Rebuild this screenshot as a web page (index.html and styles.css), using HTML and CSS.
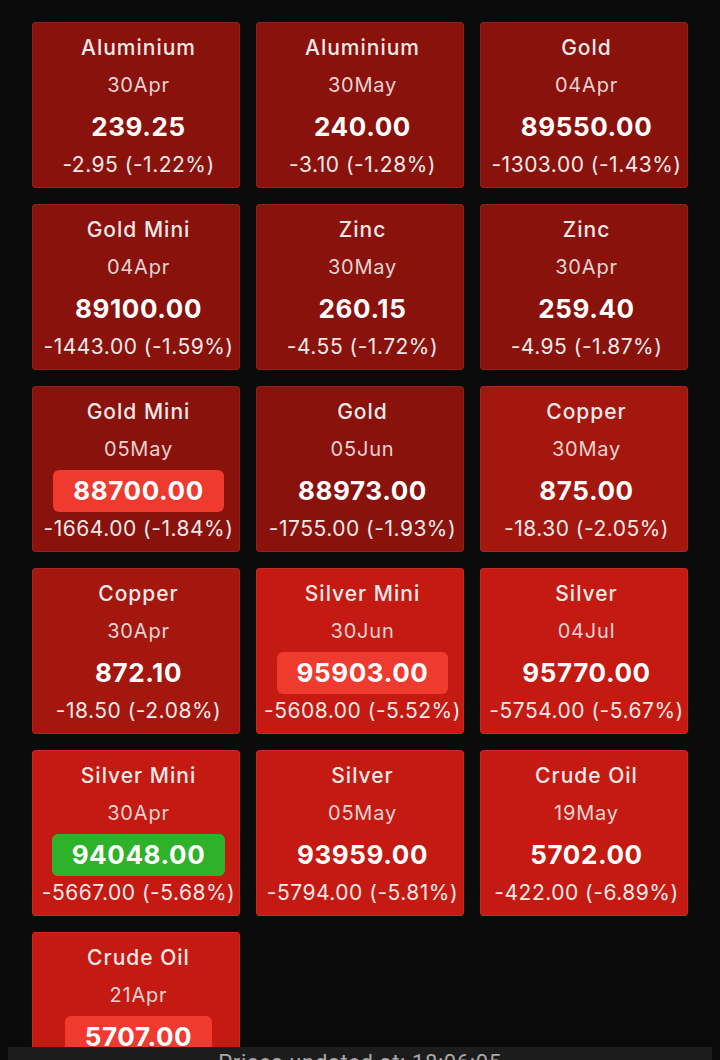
FILE: index.html
```html
<!DOCTYPE html>
<html lang="en">
<head>
    <meta charset="UTF-8">
    <meta name="viewport" content="width=device-width, initial-scale=1.0">
    <title>MCX Prices</title>
    <link rel="stylesheet" href="styles.css">
</head>
<body>
    <div class="grid">
        <div class="card shade-1">
            <div class="name">Aluminium</div>
            <div class="date">30Apr</div>
            <div class="price"><span>239.25</span></div>
            <div class="change">-2.95 (-1.22%)</div>
        </div>
        <div class="card shade-1">
            <div class="name">Aluminium</div>
            <div class="date">30May</div>
            <div class="price"><span>240.00</span></div>
            <div class="change">-3.10 (-1.28%)</div>
        </div>
        <div class="card shade-1">
            <div class="name">Gold</div>
            <div class="date">04Apr</div>
            <div class="price"><span>89550.00</span></div>
            <div class="change">-1303.00 (-1.43%)</div>
        </div>

        <div class="card shade-1">
            <div class="name">Gold Mini</div>
            <div class="date">04Apr</div>
            <div class="price"><span>89100.00</span></div>
            <div class="change">-1443.00 (-1.59%)</div>
        </div>
        <div class="card shade-1">
            <div class="name">Zinc</div>
            <div class="date">30May</div>
            <div class="price"><span>260.15</span></div>
            <div class="change">-4.55 (-1.72%)</div>
        </div>
        <div class="card shade-1">
            <div class="name">Zinc</div>
            <div class="date">30Apr</div>
            <div class="price"><span>259.40</span></div>
            <div class="change">-4.95 (-1.87%)</div>
        </div>

        <div class="card shade-1">
            <div class="name">Gold Mini</div>
            <div class="date">05May</div>
            <div class="price"><span class="flash down">88700.00</span></div>
            <div class="change">-1664.00 (-1.84%)</div>
        </div>
        <div class="card shade-1">
            <div class="name">Gold</div>
            <div class="date">05Jun</div>
            <div class="price"><span>88973.00</span></div>
            <div class="change">-1755.00 (-1.93%)</div>
        </div>
        <div class="card shade-2">
            <div class="name">Copper</div>
            <div class="date">30May</div>
            <div class="price"><span>875.00</span></div>
            <div class="change">-18.30 (-2.05%)</div>
        </div>

        <div class="card shade-2">
            <div class="name">Copper</div>
            <div class="date">30Apr</div>
            <div class="price"><span>872.10</span></div>
            <div class="change">-18.50 (-2.08%)</div>
        </div>
        <div class="card shade-3">
            <div class="name">Silver Mini</div>
            <div class="date">30Jun</div>
            <div class="price"><span class="flash down">95903.00</span></div>
            <div class="change">-5608.00 (-5.52%)</div>
        </div>
        <div class="card shade-3">
            <div class="name">Silver</div>
            <div class="date">04Jul</div>
            <div class="price"><span>95770.00</span></div>
            <div class="change">-5754.00 (-5.67%)</div>
        </div>

        <div class="card shade-3">
            <div class="name">Silver Mini</div>
            <div class="date">30Apr</div>
            <div class="price"><span class="flash up">94048.00</span></div>
            <div class="change">-5667.00 (-5.68%)</div>
        </div>
        <div class="card shade-3">
            <div class="name">Silver</div>
            <div class="date">05May</div>
            <div class="price"><span>93959.00</span></div>
            <div class="change">-5794.00 (-5.81%)</div>
        </div>
        <div class="card shade-3">
            <div class="name">Crude Oil</div>
            <div class="date">19May</div>
            <div class="price"><span>5702.00</span></div>
            <div class="change">-422.00 (-6.89%)</div>
        </div>

        <div class="card shade-3">
            <div class="name">Crude Oil</div>
            <div class="date">21Apr</div>
            <div class="price"><span class="flash down">5707.00</span></div>
            <div class="change">-417.00 (-6.81%)</div>
        </div>
    </div>

    <!-- status bar pinned to the bottom -->
    <div class="updated">Prices updated at: 18:06:05</div>
</body>
</html>
```

FILE: styles.css
```css
* {
    margin: 0;
    padding: 0;
    box-sizing: border-box;
}
body {
    background-color: #0b0b0b;
    color: #f3e8e8;
    font-family: Inter, "Noto Sans", sans-serif;
    text-align: center;
}
.grid {
    display: grid;
    grid-template-columns: repeat(3, 208px);
    gap: 16px;
    padding: 22px 32px 40px;
}
.card {
    height: 166px;
    border-radius: 4px;
    border: 1px solid rgba(255, 255, 255, 0.07);
    padding: 6px 0 0 5px;
}

/* card colour gets stronger with the drop */
.shade-1 { background: #89120c; }
.shade-2 { background: #a3170f; }
.shade-3 { background: #c41a12; }

.name {
    height: 38px;
    line-height: 38px;
    font-size: 21px;
    font-weight: 500;
    letter-spacing: 1px;
}
.date {
    height: 36px;
    line-height: 36px;
    font-size: 20px;
    letter-spacing: 0.8px;
    color: #e9d3d2;
}
.price {
    height: 48px;
    display: flex;
    align-items: center;
    justify-content: center;
}
.price span {
    display: inline-block;
    font-size: 26px;
    font-weight: 700;
    letter-spacing: 0.6px;
    color: #fff;
    line-height: 42px;
    padding: 0 20px;
    border-radius: 6px;
}
.flash.down { background: #ef3a2f; }
.flash.up { background: #2eb22a; }
.change {
    height: 28px;
    line-height: 28px;
    font-size: 21px;
    letter-spacing: 0.5px;
    white-space: nowrap;
}

.updated {
    position: fixed;
    left: 8px;
    right: 8px;
    bottom: -30px;
    height: 43px;
    background: #1c1c1c;
    color: #a8a8a8;
    font-family: Roboto, sans-serif;
    font-size: 22px;
    letter-spacing: 0.6px;
    padding-top: 3px;
}
```
